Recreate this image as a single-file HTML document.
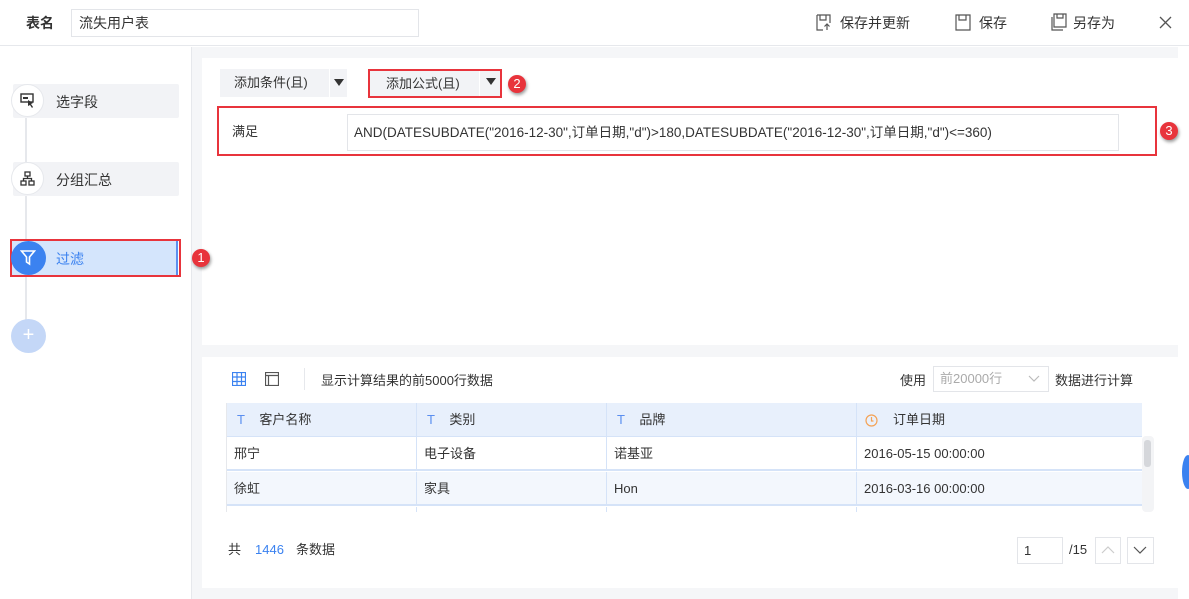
<!DOCTYPE html>
<html><head><meta charset="utf-8"><style>
*{box-sizing:border-box;margin:0;padding:0}
body{width:1189px;height:599px;overflow:hidden;background:#fff;font-family:"Liberation Sans","Noto Sans CJK SC",sans-serif;font-size:13px;color:#333;position:relative}
.a{position:absolute}
.red{border:2px solid #e8343c}
.badge{width:18px;height:18px;border-radius:50%;background:#e8343c;color:#fff;font-size:13px;text-align:center;line-height:18px;box-shadow:1px 2px 3px rgba(0,0,0,.4);z-index:5}
.step{left:13px;width:166px;height:34px;background:#f2f3f6;border-radius:2px}
.circ{width:33px;height:33px;border-radius:50%;background:#fff;border:1px solid #e6e8ec}
.th,.td{position:absolute;height:34px;line-height:34px;padding-left:7px;border-right:1px solid #d5e3f8}
</style></head><body>
<!-- top bar -->
<div class="a" style="left:0;top:0;width:1189px;height:46px;border-bottom:1px solid #e6e8ec"></div>
<div class="a" style="left:26px;top:13px;font-weight:bold;font-size:14px">表名</div>
<div class="a" style="left:71px;top:9px;width:348px;height:28px;border:1px solid #e3e5e9;padding-left:7px;line-height:26px;font-size:14px">流失用户表</div>
<svg class="a" style="left:816px;top:14px" width="16" height="17" viewBox="0 0 16 17" fill="none" stroke="#555" stroke-width="1.2"><path d="M1 1h13v8M1 1v15h6M4 1v5h6V1M11 16v-6M8.5 12.5l2.5-2.5 2.5 2.5"/></svg>
<div class="a" style="left:840px;top:13px;font-size:14px">保存并更新</div>
<svg class="a" style="left:955px;top:14px" width="16" height="17" viewBox="0 0 16 17" fill="none" stroke="#555" stroke-width="1.2"><path d="M1 1h14v15H1zM4 1v5h7V1"/></svg>
<div class="a" style="left:979px;top:13px;font-size:14px">保存</div>
<svg class="a" style="left:1050px;top:13px" width="17" height="18" viewBox="0 0 17 18" fill="none" stroke="#555" stroke-width="1.2"><path d="M4 1h12v13H4zM7 1v4h6V1M2 4v13h11"/></svg>
<div class="a" style="left:1073px;top:13px;font-size:14px">另存为</div>
<svg class="a" style="left:1159px;top:16px" width="13" height="13" viewBox="0 0 13 13" stroke="#555" stroke-width="1.3"><path d="M1 1l11 11M12 1L1 12"/></svg>
<!-- right bg -->
<div class="a" style="left:192px;top:47px;width:986px;height:552px;background:#f5f6f8"></div>
<div class="a" style="left:1178px;top:47px;width:11px;height:552px;background:#fff"></div>
<div class="a" style="left:1182px;top:455px;width:12px;height:34px;border-radius:50%;background:#3b82f0"></div>
<!-- sidebar -->
<div class="a" style="left:191px;top:47px;width:1px;height:552px;background:#e6e8ec"></div>
<div class="a" style="left:25px;top:100px;width:2px;height:240px;background:#e6e8ec"></div>
<div class="a step" style="top:84px"></div>
<div class="a circ" style="left:11px;top:84px"></div>
<svg class="a" style="left:20px;top:93px" width="15" height="15" viewBox="0 0 15 15"><rect x="1" y="1" width="12" height="8" fill="none" stroke="#333" stroke-width="1.4"/><rect x="3" y="4" width="5" height="2" fill="#333"/><path d="M8 7l5 3-2 1 2 3-1 1-2-3-2 1z" fill="#333"/></svg>
<div class="a" style="left:56px;top:92px;font-size:14px">选字段</div>
<div class="a step" style="top:162px"></div>
<div class="a circ" style="left:11px;top:162px"></div>
<svg class="a" style="left:20px;top:171px" width="15" height="15" viewBox="0 0 15 15" fill="none" stroke="#333" stroke-width="1.3"><rect x="5" y="1" width="5" height="4"/><rect x="1" y="10" width="5" height="4"/><rect x="9" y="10" width="5" height="4"/><path d="M7.5 5v2.5M3.5 10V7.5h8V10"/></svg>
<div class="a" style="left:56px;top:170px;font-size:14px">分组汇总</div>
<div class="a red" style="left:10px;top:239px;width:171px;height:38px"></div>
<div class="a" style="left:12px;top:241px;width:166px;height:34px;background:#d4e5fc;border-right:2px solid #5b8ff0"></div>
<div class="a" style="left:11px;top:241px;width:35px;height:34px;border-radius:50%;background:#3b82f0"></div>
<svg class="a" style="left:20px;top:249px" width="16" height="17" viewBox="0 0 16 17" fill="none" stroke="#fff" stroke-width="1.6"><path d="M1.5 2h13L9.5 8v7l-3-2V8z"/></svg>
<div class="a" style="left:56px;top:249px;font-size:14px;color:#3b82f0">过滤</div>
<div class="a badge" style="left:192px;top:249px">1</div>
<div class="a" style="left:11px;top:319px;width:35px;height:34px;border-radius:50%;background:#c4d7f7;color:#fff;font-size:20px;text-align:center;line-height:32px">+</div>
<!-- top panel -->
<div class="a" style="left:202px;top:58px;width:976px;height:287px;background:#fff"></div>
<div class="a" style="left:220px;top:69px;width:109px;height:28px;background:#f2f3f6;line-height:28px;padding-left:14px">添加条件(且)</div>
<div class="a" style="left:330px;top:69px;width:17px;height:28px;background:#f2f3f6"></div>
<div class="a" style="left:334px;top:79px;border:5px solid transparent;border-top:7px solid #333;border-bottom:0"></div>
<div class="a red" style="left:368px;top:69px;width:134px;height:29px"></div>
<div class="a" style="left:370px;top:71px;width:109px;height:25px;background:#f2f3f6;line-height:25px;padding-left:16px">添加公式(且)</div>
<div class="a" style="left:480px;top:71px;width:20px;height:25px;background:#f2f3f6"></div>
<div class="a" style="left:486px;top:78px;border:5px solid transparent;border-top:7px solid #333;border-bottom:0"></div>
<div class="a badge" style="left:508px;top:75px">2</div>
<div class="a red" style="left:217px;top:106px;width:940px;height:50px"></div>
<div class="a" style="left:232px;top:121px">满足</div>
<div class="a" style="left:347px;top:114px;width:772px;height:37px;border:1px solid #e3e5e9;padding-left:6px;line-height:35px;font-size:13.5px">AND(DATESUBDATE("2016-12-30",订单日期,"d")&gt;180,DATESUBDATE("2016-12-30",订单日期,"d")&lt;=360)</div>
<div class="a badge" style="left:1160px;top:122px">3</div>
<!-- bottom panel -->
<div class="a" style="left:202px;top:357px;width:976px;height:231px;background:#fff"></div>
<svg class="a" style="left:232px;top:372px" width="14" height="14" viewBox="0 0 14 14" fill="none" stroke="#3b82f0" stroke-width="1.2"><rect x=".5" y=".5" width="13" height="13"/><path d="M.5 5h13M.5 9.5h13M5 .5v13M9.5 .5v13"/></svg>
<svg class="a" style="left:265px;top:372px" width="14" height="14" viewBox="0 0 14 14" fill="none" stroke="#555" stroke-width="1.2"><rect x=".5" y=".5" width="13" height="13"/><path d="M.5 3.5h13M3.5 3.5v10"/></svg>
<div class="a" style="left:304px;top:368px;width:1px;height:22px;background:#e6e8ec"></div>
<div class="a" style="left:321px;top:370px">显示计算结果的前5000行数据</div>
<div class="a" style="left:900px;top:370px">使用</div>
<div class="a" style="left:933px;top:366px;width:116px;height:26px;border:1px solid #e3e5e9;color:#aaa;padding-left:6px;line-height:24px">前20000行</div>
<svg class="a" style="left:1028px;top:375px" width="12" height="8" viewBox="0 0 12 8" fill="none" stroke="#bbb" stroke-width="1.2"><path d="M1 1l5 5 5-5"/></svg>
<div class="a" style="left:1055px;top:370px">数据进行计算</div>
<!-- table -->
<div class="a" style="left:226px;top:403px;width:916px;height:109px;overflow:hidden;border-left:1px solid #e6e8ec">
 <div class="a" style="left:0;top:0;width:916px;height:34px;background:#e8f0fc;border-bottom:1px solid #d5e3f8"></div>
 <div class="th" style="left:0;width:190px;padding-left:10px"><span style="color:#5b8ff0">T</span>&nbsp;&nbsp;&nbsp;&nbsp;客户名称</div>
 <div class="th" style="left:190px;width:190px;padding-left:10px"><span style="color:#5b8ff0">T</span>&nbsp;&nbsp;&nbsp;&nbsp;类别</div>
 <div class="th" style="left:380px;width:250px;padding-left:10px"><span style="color:#5b8ff0">T</span>&nbsp;&nbsp;&nbsp;&nbsp;品牌</div>
 <div class="th" style="left:630px;width:286px;padding-left:36px;border-right:0">订单日期</div>
 <svg class="a" style="left:638px;top:11px" width="13" height="13" viewBox="0 0 13 13" fill="none" stroke="#f4a255" stroke-width="1.2"><circle cx="6.5" cy="6.5" r="5.5"/><path d="M6.5 3v4h2"/></svg>
 <div class="a" style="left:0;top:34px;width:916px;height:34px;border-bottom:2px solid #d5e3f8"></div>
 <div class="td" style="left:0;top:34px;width:190px">邢宁</div>
 <div class="td" style="left:190px;top:34px;width:190px">电子设备</div>
 <div class="td" style="left:380px;top:34px;width:250px">诺基亚</div>
 <div class="td" style="left:630px;top:34px;width:286px;border:0">2016-05-15 00:00:00</div>
 <div class="a" style="left:0;top:69px;width:916px;height:34px;background:#f3f7fd;border-bottom:2px solid #d5e3f8"></div>
 <div class="td" style="left:0;top:69px;width:190px">徐虹</div>
 <div class="td" style="left:190px;top:69px;width:190px">家具</div>
 <div class="td" style="left:380px;top:69px;width:250px">Hon</div>
 <div class="td" style="left:630px;top:69px;width:286px;border:0">2016-03-16 00:00:00</div>
 <div class="td" style="left:0;top:104px;width:190px"></div>
 <div class="td" style="left:190px;top:104px;width:190px"></div>
 <div class="td" style="left:380px;top:104px;width:250px"></div>
</div>
<div class="a" style="left:1142px;top:436px;width:12px;height:76px;background:#f3f4f6;border-radius:4px"></div>
<div class="a" style="left:1144px;top:440px;width:7px;height:27px;background:#d5d7db;border-radius:3px"></div>
<div class="a" style="left:228px;top:541px;line-height:18px">共</div>
<div class="a" style="left:255px;top:541px;line-height:18px;color:#3b82f0">1446</div>
<div class="a" style="left:296px;top:541px;line-height:18px">条数据</div>
<div class="a" style="left:1017px;top:537px;width:46px;height:27px;border:1px solid #e3e5e9;padding-left:6px;line-height:25px">1</div>
<div class="a" style="left:1069px;top:542px">/15</div>
<div class="a" style="left:1095px;top:537px;width:26px;height:27px;border:1px solid #e3e5e9"></div>
<svg class="a" style="left:1101px;top:546px" width="14" height="8" viewBox="0 0 14 8" fill="none" stroke="#ccc" stroke-width="1.2"><path d="M1 7l6-6 6 6"/></svg>
<div class="a" style="left:1127px;top:537px;width:27px;height:27px;border:1px solid #e3e5e9"></div>
<svg class="a" style="left:1133px;top:546px" width="14" height="8" viewBox="0 0 14 8" fill="none" stroke="#555" stroke-width="1.2"><path d="M1 1l6 6 6-6"/></svg>
</body></html>
